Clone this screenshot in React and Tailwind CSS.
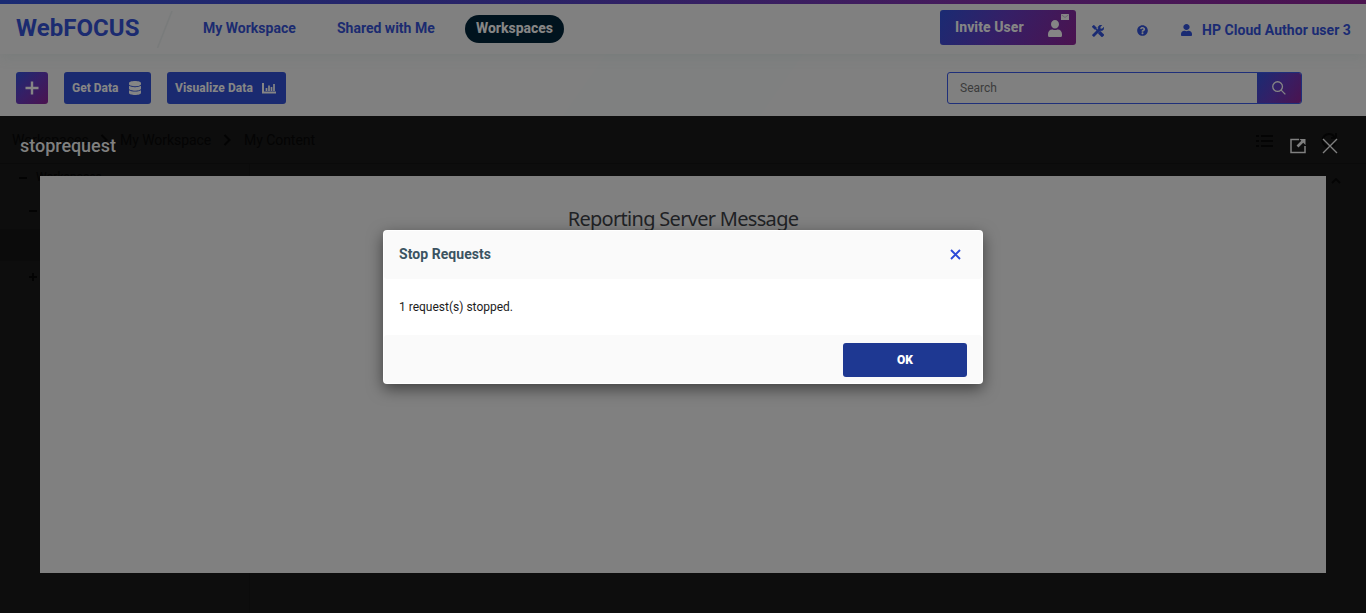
import React from "react";
import { FaDatabase, FaUser, FaQuestionCircle } from "react-icons/fa";

function Bars() {
  return (
    <svg className="-ml-px h-[11px] w-[14px]" viewBox="0 0 14 11" fill="none" stroke="#858585">
      <path d="M1 0v9.500h13" strokeWidth="2" />
      <path d="M4.500 8V5M7 8V2.500M9.500 8V4M12 8V1" strokeWidth="1.7" />
    </svg>
  );
}

function Tools() {
  return (
    <svg className="h-3 w-3" viewBox="0 0 12 12" fill="none" stroke="#1a2b73">
      <path d="M.8 .8l3 3" strokeWidth="2.800" />
      <path d="M3.500 3.500l4 4" strokeWidth="1.600" />
      <path d="M7.200 7.200l4 4" strokeWidth="3.400" />
      <path d="M.9 11.100l6.600-6.600" strokeWidth="2.800" />
      <path d="M9.800.3A2.800 2.800 0 0 0 6.300 4Q8.500 7.500 11.700 4.200L11.800 2.300 10 4 8.200 3.800 8.100 2z" fill="#1a2b73" strokeWidth=".6" />
    </svg>
  );
}

function Envelope() {
  return (
    <svg className="absolute -top-[2px] left-[13px] h-[6px] w-2" viewBox="0 0 8 6">
      <path d="M0 0h8v6H0z" fill="#858585" />
      <path d="M.5 .8L4 3.500 7.500 .8" fill="none" stroke="#66576c" strokeWidth=".7" />
    </svg>
  );
}

function Chevron() {
  return (
    <svg className="h-3 w-[9px]" viewBox="0 0 9 12" fill="none" stroke="#030303" strokeWidth="2">
      <path d="M1.500 1l5 5-5 5" />
    </svg>
  );
}

function Header() {
  return (
    <header className="relative z-10 flex h-[54px] items-start border-t-4 border-transparent bg-[#808080] shadow-[0_2px_12px_rgba(90,110,105,0.22)]">
      <div className="absolute -top-1 left-0 h-1 w-full bg-[linear-gradient(90deg,#1a2b73,#2b2366_40%,#451b5c_70%,#4b1350)]" />
      <div className="ml-4 mt-2 w-[124px] text-2xl leading-8 font-bold tracking-[0.05px] text-[#1b2b70]">WebFOCUS</div>
      <svg className="ml-4 mt-[7px] h-[38px] w-[18px]" viewBox="0 0 18 38">
        <path d="M1.500 37L16 0" stroke="#797b7b" strokeWidth="1.6" />
      </svg>
      <nav className="ml-[29px] flex h-[49px] items-center text-sm font-bold text-[#1b2b70]">
        <span className="w-[134px] pb-0.5">My Workspace</span>
        <span className="w-[128px] pb-0.5">Shared with Me</span>
        <span className="mt-px flex h-7 w-[99px] items-center justify-center rounded-full bg-[#00131e] pb-0.5 font-extrabold tracking-[-0.02px] text-[#858585]">Workspaces</span>
      </nav>
      <div className="ml-auto mt-1.5 flex h-[35px] w-[136px] items-center rounded-[3px] bg-[linear-gradient(120deg,#1a2b73,#351f66_45%,#4b134f)] pl-[15px] text-sm font-bold text-[#858585]">
        <span className="w-[93px] pb-0.5 font-extrabold tracking-[0.05px]">Invite User</span>
        <span className="relative -mt-0.5">
          <FaUser className="mt-1 h-[17px] w-[14px]" preserveAspectRatio="none" />
          <Envelope />
        </span>
      </div>
      <div className="ml-4 mt-[3px] flex h-[46px] items-center text-[#1a2b73]">
        <span className="w-[45px] pt-px"><Tools /></span>
        <FaQuestionCircle className="h-[11px] w-[11px]" />
        <FaUser className="ml-[33px] h-3 w-[11px]" preserveAspectRatio="none" />
        <span className="ml-[10px] w-[164px] text-sm font-bold tracking-[0.05px] whitespace-nowrap">HP Cloud Author user 3</span>
      </div>
    </header>
  );
}

function Toolbar() {
  return (
    <div className="relative flex h-[62px] items-center bg-[linear-gradient(125deg,#808080_43%,#7f8080_43%_57%,#808080_57%)] px-4 pb-px pt-[7px] text-xs font-extrabold text-[#858585]">
      <div className="flex size-8 items-center justify-center rounded-[3px] bg-[linear-gradient(135deg,#1a2b73,#351f66_45%,#4b134f)]">
        <svg className="size-3.5" viewBox="0 0 14 14" stroke="#858585" strokeWidth="2.4"><path d="M7 .5v13M.5 7h13" /></svg>
      </div>
      <div className="ml-4 flex h-8 w-[87px] items-center rounded-[3px] bg-[#1a2a70] pl-2">
        <span className="w-[57px] whitespace-nowrap">Get Data</span>
        <FaDatabase className="h-[14px] w-3" preserveAspectRatio="none" />
      </div>
      <div className="ml-4 flex h-8 w-[119px] items-center rounded-[3px] bg-[#1a2a70] pl-2">
        <span className="w-[88px] whitespace-nowrap tracking-[0.05px]">Visualize Data</span>
        <Bars />
      </div>
      <div className="ml-auto mr-12 flex h-8 w-[355px] overflow-hidden rounded-[3px] border border-[#1f2f7a] font-normal text-[#3b3b3b]">
        <span className="flex-1 pl-3 leading-[30px]">Search</span>
        <span className="flex w-11 items-center justify-center bg-[linear-gradient(125deg,#1a2b73,#351f66_50%,#4b134f)]">
          <svg className="size-[14px]" viewBox="0 0 15 15" fill="none" stroke="#858585" strokeWidth="1.4">
            <circle cx="6" cy="6" r="5.200" /><path d="M9.800 9.800l4.500 4.500" />
          </svg>
        </span>
      </div>
    </div>
  );
}

function Breadcrumbs() {
  return (
    <div className="flex h-12 items-center border-b border-[#0a0a0a] pl-3 text-sm text-[#040404]">
      <span className="w-[88px]">Workspaces</span>
      <Chevron />
      <span className="ml-[11px] w-[103px] tracking-[-0.05px]">My Workspace</span>
      <Chevron />
      <span className="ml-3 tracking-[-0.05px]">My Content</span>
      <svg className="ml-auto mr-[47px] mt-0.5 h-[14px] w-[17px]" viewBox="0 0 17 14" stroke="#040404" strokeWidth="1.800">
        <path d="M0 2h3M5 2h12M0 7h3M5 7h12M0 12h3M5 12h12" />
      </svg>
      <svg className="mr-7 h-4 w-[18px]" viewBox="0 0 18 16" fill="none" stroke="#040404" strokeWidth="2">
        <path d="M14.500 5A6.500 6.500 0 1 0 15 11M16 1v5h-5" />
      </svg>
    </div>
  );
}

function Tree() {
  return (
    <div className="flex h-[449px] text-xs text-[#040404]">
      <div className="w-[250px] border-r border-[#0b0b0b]">
        <div className="flex h-[28px] items-center gap-[9px] pl-[19px]"><span className="h-0.5 w-2 bg-[#030303]" /><span className="pb-0.5">Workspaces</span></div>
        <div className="flex h-[37px] items-center pl-[29px]"><span className="h-0.5 w-2 bg-[#030303]" /></div>
        <div className="h-[32px] bg-[#0b0b0b]" />
        <div className="flex h-[32px] items-center pl-[29px]">
          <svg className="size-2" viewBox="0 0 8 8" stroke="#030303" strokeWidth="2"><path d="M4 0v8M0 4h8" /></svg>
        </div>
      </div>
      <svg className="ml-auto mr-[25px] mt-[14px] h-1.5 w-[10px]" viewBox="0 0 10 6" fill="none" stroke="#040404" strokeWidth="1.800"><path d="M1 5l4-4 4 4" /></svg>
    </div>
  );
}

function Viewer() {
  return (
    <section className="absolute inset-x-0 bottom-0 top-[116px] z-20 flex flex-col px-10 pb-10">
      <div className="-mx-5 flex h-[60px] shrink-0 items-center">
        <span className="text-lg font-medium tracking-[-0.04px] text-[#808080]">stoprequest</span>
        <svg className="ml-auto h-4 w-4" viewBox="0 0 16 16" fill="none" stroke="#808080">
          <path d="M9 1.500H1v13h14V8" strokeWidth="1.500" />
          <path d="M7.500 8.500l5-5" strokeWidth="2.600" />
          <path d="M9.500 1H15.500V7z" fill="#808080" stroke="none" />
        </svg>
        <svg className="ml-4 mr-2 size-4" viewBox="0 0 16 16" stroke="#808080" strokeWidth="1.400"><path d="M1 1l14 14M15 1L1 15" /></svg>
      </div>
      <div className="flex-1 bg-[#808080] pt-[29px] text-center font-['Noto_Sans',sans-serif] text-[20px] leading-7 text-[#1f2225]">
        <span className="inline-block whitespace-nowrap tracking-[-0.7px]">Reporting Server Message</span>
      </div>
    </section>
  );
}

function Dialog() {
  return (
    <div role="dialog" className="absolute left-[383px] top-[230px] z-30 flex h-[154px] w-[600px] flex-col overflow-hidden rounded-[4px] bg-white p-px shadow-[0_5px_15px_rgba(0,0,0,0.5)]">
      <div className="flex h-12 items-center justify-between rounded-[3px] bg-[#fafafa] pb-0.5 pl-[15px] pr-[21px]">
        <h2 className="text-sm font-bold tracking-[0.05px] text-[#3b5361]">Stop Requests</h2>
        <svg className="mt-px size-[11px]" viewBox="0 0 11 11" stroke="#2b4ad8" strokeWidth="1.900"><path d="M1 1l9 9M10 1l-9 9" /></svg>
      </div>
      <div className="flex h-14 items-center pl-[15px] text-xs text-[#1c1c1c]">1 request(s) stopped.</div>
      <div className="flex h-12 items-center justify-end rounded-[3px] bg-[#fafafa] pr-[15px] pt-0.5">
        <button className="h-[34px] w-[124px] rounded-[3px] bg-[#1e3892] text-xs font-black text-white">OK</button>
      </div>
    </div>
  );
}

export default function App() {
  return (
    <div className="relative h-[613px] w-full overflow-hidden bg-[#0d0d0d] font-[Roboto,sans-serif]">
      <Header />
      <Toolbar />
      <Breadcrumbs />
      <Tree />
      <Viewer />
      <Dialog />
    </div>
  );
}
